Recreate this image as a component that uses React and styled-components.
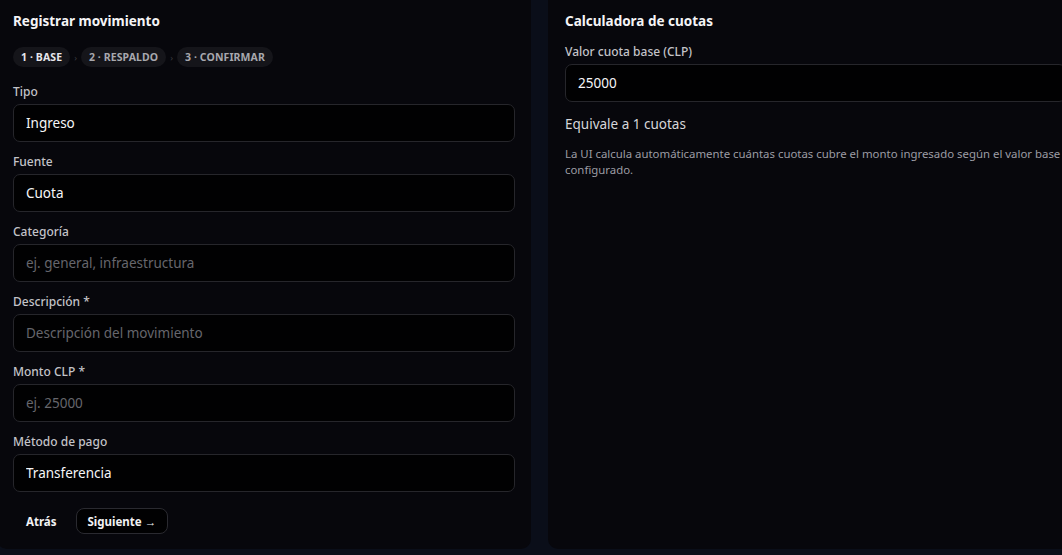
import React from 'react';
import styled, { createGlobalStyle } from 'styled-components';

const GlobalStyle = createGlobalStyle`
  html, body {
    margin: 0;
    padding: 0;
    background: #0a0e19;
    font-family: "Noto Sans", "Open Sans", sans-serif;
    color: #f2f2f4;
    overflow: hidden;
  }
  * { box-sizing: border-box; }
`;

const Page = styled.div`
  display: grid;
  grid-template-columns: 534px 534px;
  column-gap: 17px;
  margin-left: -3px;
  height: 555px;
  align-items: start;
`;

const Panel = styled.section`
  background: #07070c;
  border-radius: 0 0 10px 10px;
  padding: 11px 16px 15px ${(p) => (p.$stretch ? '17px' : '16px')};
  display: flex;
  flex-direction: column;
  height: ${(p) => (p.$stretch ? '549px' : 'auto')};
`;

const Title = styled.h2`
  margin: 0;
  font-size: 13.5px;
  line-height: 21px;
  font-weight: 700;
  color: #f4f4f6;
`;

const Steps = styled.div`
  display: flex;
  align-items: center;
  gap: 4px;
  margin: 15px 0 16px;
`;

const Step = styled.span`
  display: inline-flex;
  align-items: center;
  height: 20px;
  padding: 0 8px;
  border-radius: 999px;
  background: #15151a;
  font-size: 10.5px;
  font-weight: 700;
  letter-spacing: 0.1px;
  color: ${(p) => (p.$active ? '#e6e6ea' : '#a8a8ae')};
`;

const Sep = styled.span`
  font-size: 9px;
  color: #3a3a40;
  line-height: 1;
`;

const Fields = styled.div`
  display: flex;
  flex-direction: column;
  gap: 11px;
`;

const Field = styled.label`
  display: flex;
  flex-direction: column;
  gap: 4px;
  margin-top: ${(p) => p.$top || 0}px;
`;

const Label = styled.span`
  font-size: 12px;
  line-height: 17px;
  font-weight: 500;
  color: #c3c3c8;
`;

const Input = styled.input`
  height: 38px;
  width: 100%;
  padding: 0 12px;
  background: #010102;
  border: 1px solid #26262b;
  border-radius: 7px;
  color: #f6f6f8;
  font-family: inherit;
  font-size: 13.5px;
  outline: none;
  &::placeholder { color: #66666c; }
`;

const Actions = styled.div`
  display: flex;
  align-items: center;
  gap: 6px;
  margin-top: 16px;
`;

const Button = styled.button`
  height: 26px;
  padding: 0 ${(p) => (p.$ghost ? '12px' : '11px')};
  border-radius: 8px;
  font-family: inherit;
  font-size: 11.5px;
  font-weight: 700;
  color: #f2f2f4;
  background: ${(p) => (p.$ghost ? 'transparent' : '#010102')};
  border: 1px solid ${(p) => (p.$ghost ? 'transparent' : '#2a2a30')};
  cursor: pointer;
`;

const Result = styled.p`
  margin: 12px 0 0;
  font-size: 13.5px;
  line-height: 20px;
  color: #d6d6da;
`;

const Note = styled.p`
  margin: 12px 0 0;
  font-size: 11.4px;
  line-height: 16px;
  color: #9c9ca4;
`;

const fields = [
  { label: 'Tipo', value: 'Ingreso' },
  { label: 'Fuente', value: 'Cuota' },
  { label: 'Categoría', placeholder: 'ej. general, infraestructura' },
  { label: 'Descripción *', placeholder: 'Descripción del movimiento' },
  { label: 'Monto CLP *', placeholder: 'ej. 25000' },
  { label: 'Método de pago', value: 'Transferencia' },
];

const steps = ['1 · BASE', '2 · RESPALDO', '3 · CONFIRMAR'];

export default function App() {
  return (
    <>
      <GlobalStyle />
      <Page>
        <Panel>
          <Title>Registrar movimiento</Title>
          <Steps>
            {steps.map((s, i) => (
              <React.Fragment key={s}>
                {i > 0 && <Sep>›</Sep>}
                <Step $active={i === 0}>{s}</Step>
              </React.Fragment>
            ))}
          </Steps>
          <Fields>
            {fields.map((f) => (
              <Field key={f.label}>
                <Label>{f.label}</Label>
                <Input readOnly value={f.value || ''} placeholder={f.placeholder} />
              </Field>
            ))}
          </Fields>
          <Actions>
            <Button $ghost>Atrás</Button>
            <Button>Siguiente →</Button>
          </Actions>
        </Panel>
        <Panel $stretch>
          <Title>Calculadora de cuotas</Title>
          <Field $top={11}>
            <Label>Valor cuota base (CLP)</Label>
            <Input readOnly value="25000" />
          </Field>
          <Result>Equivale a 1 cuotas</Result>
          <Note>
            La UI calcula automáticamente cuántas cuotas cubre el monto ingresado según el valor base
            configurado.
          </Note>
        </Panel>
      </Page>
    </>
  );
}
